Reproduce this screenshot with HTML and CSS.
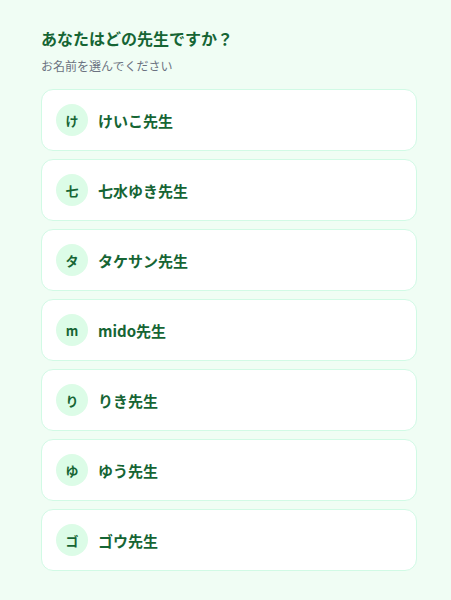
FILE: index.html
```html
<!DOCTYPE html>
<html lang="ja">
<head>
<meta charset="utf-8">
<title>先生選択</title>
<link rel="stylesheet" href="styles.css">
</head>
<body>
<main class="page">
  <header class="head">
    <h1 class="title">あなたはどの先生ですか？</h1>
    <p class="sub">お名前を選んでください</p>
  </header>
  <ul class="list">
    <li class="card"><span class="avatar">け</span><span class="name">けいこ先生</span></li>
    <li class="card"><span class="avatar">七</span><span class="name">七水ゆき先生</span></li>
    <li class="card"><span class="avatar">タ</span><span class="name">タケサン先生</span></li>
    <li class="card"><span class="avatar">m</span><span class="name">mido先生</span></li>
    <li class="card"><span class="avatar">り</span><span class="name">りき先生</span></li>
    <li class="card"><span class="avatar">ゆ</span><span class="name">ゆう先生</span></li>
    <li class="card"><span class="avatar">ゴ</span><span class="name">ゴウ先生</span></li>
  </ul>
</main>
</body>
</html>
```
FILE: styles.css
```css
html, body {
  margin: 0;
  padding: 0;
  background: #f0fdf4;
}
body {
  font-family: "Noto Sans CJK JP", "Noto Sans", sans-serif;
  color: #14532d;
}
.page {
  padding: 26px 34px 30px 41px;
}
.head {
  margin-bottom: 15px;
}
.title {
  margin: 0;
  font-size: 16px;
  line-height: 24px;
  font-weight: 700;
  color: #166534;
}
.sub {
  margin: 8px 0 0;
  font-size: 12px;
  line-height: 16px;
  color: #6b7280;
}
.list {
  list-style: none;
  margin: 0;
  padding: 0;
  display: flex;
  flex-direction: column;
  gap: 8px;
}
.card {
  display: flex;
  align-items: center;
  gap: 10px;
  background: #ffffff;
  border: 1px solid #d1fae5;
  border-radius: 12px;
  padding: 14px;
}
.avatar {
  width: 32px;
  height: 32px;
  border-radius: 50%;
  background: #dcfce7;
  display: flex;
  align-items: center;
  justify-content: center;
  font-size: 13px;
  font-weight: 700;
  color: #166534;
}
.name {
  font-size: 15px;
  font-weight: 700;
  color: #166534;
}
```
